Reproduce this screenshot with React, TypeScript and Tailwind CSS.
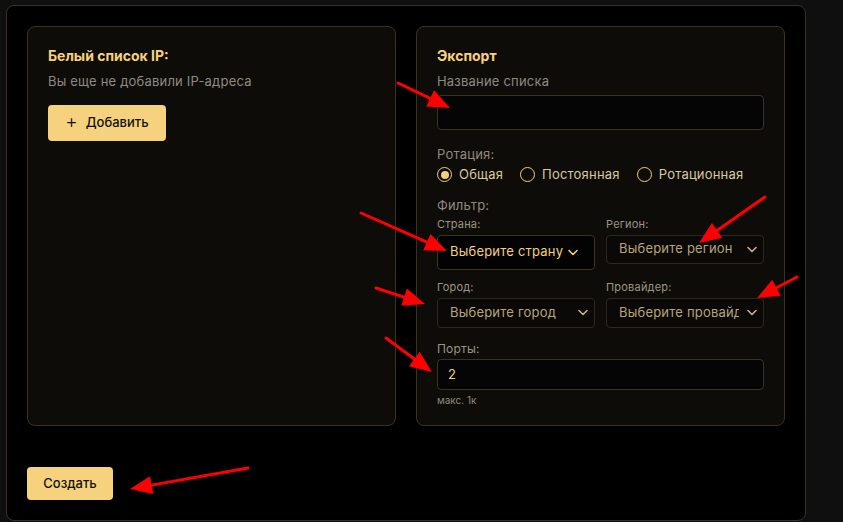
import React, { useState } from "react";

const font = { fontFamily: "Inter, 'Noto Sans', sans-serif" };

const Chevron = ({ className = "" }: { className?: string }) => (
  <svg width="10" height="7" viewBox="0 0 10 7" className={className}>
    <path d="M1 1.5 L5 5.5 L9 1.5" fill="none" stroke="currentColor" strokeWidth="1.6" strokeLinecap="round" strokeLinejoin="round" />
  </svg>
);

const Radio = ({ label, checked, onClick }: { label: string; checked: boolean; onClick: () => void }) => (
  <button type="button" onClick={onClick} className="flex items-center gap-[7px] text-[13px] tracking-[0.2px] text-[#d9c9a0]">
    <span className="flex h-[15px] w-[15px] items-center justify-center rounded-full border-[1.5px] border-[#f3cf7a]">
      {checked && <span className="h-[8px] w-[8px] rounded-full bg-[#f3cf7a]" />}
    </span>
    {label}
  </button>
);

const Select = ({ label, placeholder, active, tall }: { label: string; placeholder: string; active?: boolean; tall?: boolean }) => (
  <div className="flex flex-col">
    <span className="mb-[4px] text-[11px] leading-[14px] tracking-[0.2px] text-[#9b9486]">{label}</span>
    {active ? (
      <div className="flex h-[35px] w-[158px] items-center gap-[5px] overflow-hidden rounded-[4px] border border-[#3a3222] bg-[#030303] pl-[12px] text-[13px] tracking-[0.2px] text-[#f3d07d] whitespace-nowrap">
        {placeholder}
        <Chevron className="shrink-0" />
      </div>
    ) : (
      <div className={`flex ${tall ? "h-[30px]" : "h-[29px]"} w-[158px] items-center justify-between rounded-[4px] border border-[#2e281c] bg-[#0a0907] pl-[12px] pr-[6px] text-[13px] tracking-[0.2px] text-[#b8a47a] whitespace-nowrap`}>
        <span className="w-[120px] overflow-hidden">{placeholder}</span>
        <Chevron className="shrink-0 text-[#c8b27f]" />
      </div>
    )}
  </div>
);

const Arrow = ({ x1, y1, x2, y2 }: { x1: number; y1: number; x2: number; y2: number }) => {
  const a = Math.atan2(y2 - y1, x2 - x1);
  const len = 22;
  const w = 9;
  const bx = x2 - Math.cos(a) * len;
  const by = y2 - Math.sin(a) * len;
  const px = -Math.sin(a) * w;
  const py = Math.cos(a) * w;
  return (
    <g>
      <line x1={x1} y1={y1} x2={bx} y2={by} stroke="#ff0000" strokeWidth="3" strokeLinecap="round" />
      <polygon points={`${x2},${y2} ${bx + px},${by + py} ${bx - px},${by - py}`} fill="#ff0000" />
    </g>
  );
};

export default function App() {
  const [rotation, setRotation] = useState("common");
  const [ports, setPorts] = useState("2");

  return (
    <div className="relative h-[522px] w-[843px] overflow-hidden bg-[#0f0f0f] pl-[6px] pt-[5px]" style={font}>
      <div className="flex h-[516px] w-[800px] flex-col rounded-[8px] border border-[#3a3224] bg-black p-[20px]">
        <div className="flex gap-[20px]">
          {/* whitelist */}
          <div className="h-[400px] w-[369px] rounded-[8px] border border-[#3a3122] bg-[#0e0c09] px-[20px] pt-[19px]">
            <h3 className="text-[14px] font-bold leading-[20px] text-[#f6d27c]">Белый список IP:</h3>
            <p className="mt-[6px] text-[13px] leading-[18px] tracking-[0.2px] text-[#8f8a80]">Вы еще не добавили IP-адреса</p>
            <button className="mt-[15px] flex h-[36px] w-[118px] items-center justify-center gap-[8px] rounded-[4px] bg-[#f7d27e] text-[13px] font-medium text-[#111]">
              <span className="mb-[4px] text-[19px] font-light leading-none">+</span>
              Добавить
            </button>
          </div>

          {/* export */}
          <div className="h-[400px] w-[369px] rounded-[8px] border border-[#3a3122] bg-[#0e0c09] px-[20px] pt-[19px]">
            <h3 className="text-[14px] font-bold leading-[20px] text-[#f6d27c]">Экспорт</h3>
            <label className="mt-[6px] block text-[13px] leading-[18px] tracking-[0.2px] text-[#8f8a80]">Название списка</label>
            <input className="mt-[5px] block h-[35px] w-[327px] rounded-[4px] border border-[#3a3222] bg-[#050505] px-[12px] text-[13px] text-[#f3d07d] outline-none" />

            <div className="mt-[15px] text-[13px] leading-[18px] tracking-[0.2px] text-[#8f8a80]">Ротация:</div>
            <div className="mt-[2px] flex gap-[17px]">
              <Radio label="Общая" checked={rotation === "common"} onClick={() => setRotation("common")} />
              <Radio label="Постоянная" checked={rotation === "static"} onClick={() => setRotation("static")} />
              <Radio label="Ротационная" checked={rotation === "rotating"} onClick={() => setRotation("rotating")} />
            </div>

            <div className="mt-[11px] text-[13px] leading-[18px] tracking-[0.2px] text-[#8f8a80]">Фильтр:</div>
            <div className="mt-[3px] grid grid-cols-[158px_158px] gap-x-[11px] gap-y-[10px]">
              <Select label="Страна:" placeholder="Выберите страну" active />
              <Select label="Регион:" placeholder="Выберите регион" />
              <Select label="Город:" placeholder="Выберите город" tall />
              <Select label="Провайдер:" placeholder="Выберите провайдера" tall />
            </div>

            <div className="mt-[13px] text-[12px] leading-[16px] tracking-[0.2px] text-[#9b9486]">Порты:</div>
            <input
              value={ports}
              onChange={(e) => setPorts(e.target.value)}
              className="mt-[2px] block h-[31px] w-[327px] rounded-[4px] border border-[#3a3222] bg-[#050505] px-[10px] text-[13px] text-[#f3d07d] outline-none"
            />
            <div className="mt-[3px] text-[10px] text-[#8f8a80]">макс. 1к</div>
          </div>
        </div>

        <button className="mt-[41px] flex h-[34px] w-[86px] items-center justify-center rounded-[4px] bg-[#f7d27e] text-[13px] font-medium text-[#111]">
          Создать
        </button>
      </div>

      <svg className="pointer-events-none absolute left-0 top-0" width="843" height="522">
        <Arrow x1={398} y1={83} x2={450} y2={108} />
        <Arrow x1={361} y1={213} x2={447} y2={251} />
        <Arrow x1={765} y1={197} x2={699} y2={243} />
        <Arrow x1={797} y1={277} x2={757} y2={298} />
        <Arrow x1={376} y1={288} x2={425} y2={304} />
        <Arrow x1={386} y1={338} x2={432} y2={372} />
        <Arrow x1={248} y1={468} x2={130} y2={489} />
      </svg>
    </div>
  );
}
